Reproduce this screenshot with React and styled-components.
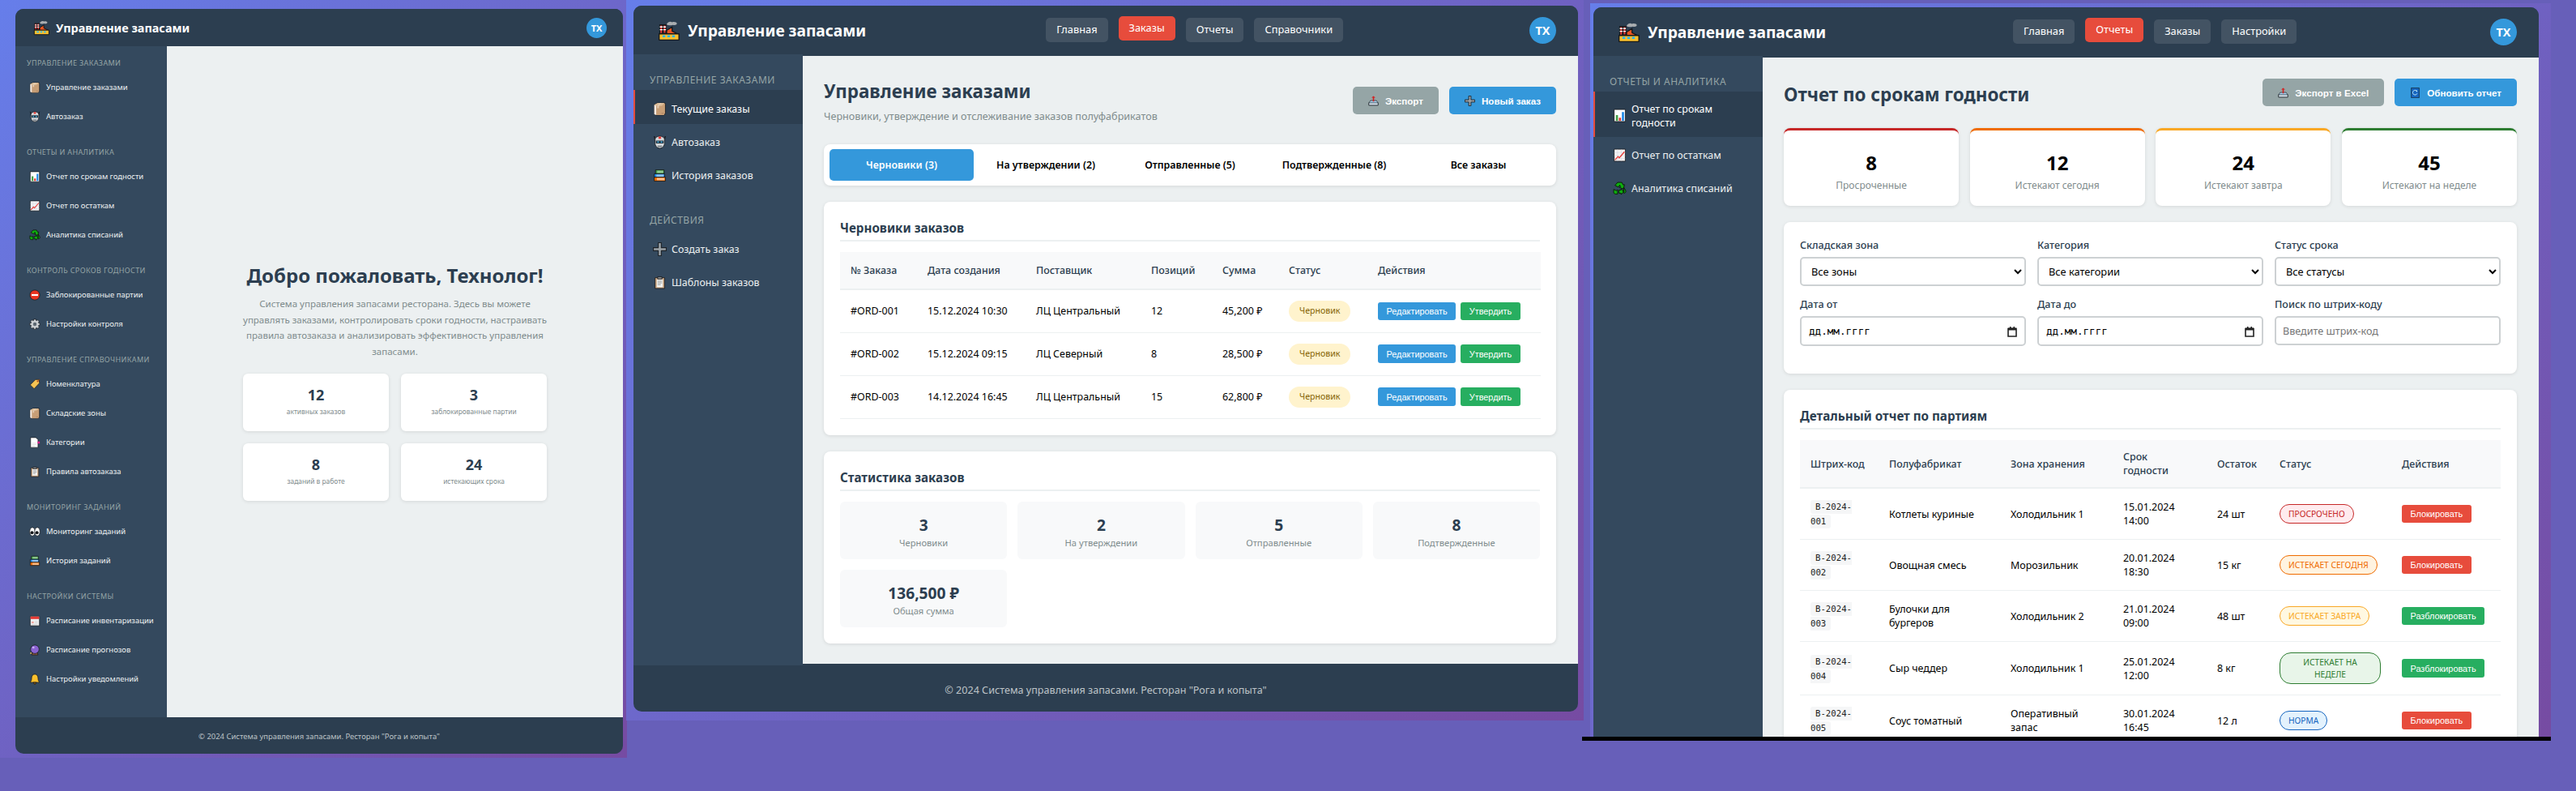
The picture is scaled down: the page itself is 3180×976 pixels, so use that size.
import React from "react";
import styled, { createGlobalStyle, css } from "styled-components";

const Global = createGlobalStyle`
  html, body { margin: 0; padding: 0; background: #675fb9; }
  * { box-sizing: border-box; }
  body { font-family: "Noto Sans", "Open Sans", sans-serif; }
`;

const Page = styled.div`
  display: flex;
  align-items: flex-start;
  width: 3180px;
  height: 976px;
  overflow: hidden;
  background: #675fb9;
`;

const Backdrop = styled.div`
  flex: none;
  width: ${(p) => p.$w}px;
  height: ${(p) => p.$h}px;
  padding: ${(p) => p.$pad};
  margin: ${(p) => p.$margin || 0};
  background: linear-gradient(135deg, #667eea 0%, #764ba2 100%);
`;

const ThirdColumn = styled.div`
  flex: none;
  margin-left: -2px;
  width: 1196px;
`;

const BlackRule = styled.div`
  height: 5px;
  background: #000;
`;

const Win = styled.div`
  display: flex;
  flex-direction: column;
  height: 100%;
  background: #2c3e50;
  border-radius: ${(p) => (p.$cut ? "10px 10px 0 0" : "10px")};
  overflow: hidden;
  color: #000;
`;

const TopBar = styled.header`
  flex: none;
  display: flex;
  align-items: center;
  justify-content: space-between;
  height: ${(p) => (p.$c ? 46 : 60)}px;
  padding: ${(p) => (p.$c ? "0 20px 0 22px" : "0 27px 0 30px")};
  background: #2c3e50;
  color: #fff;
`;

const Brand = styled.div`
  display: flex;
  align-items: center;
  gap: ${(p) => (p.$c ? 8 : 10)}px;
  font-weight: 700;
  font-size: ${(p) => (p.$c ? 14.4 : 19.2)}px;
`;

const NavRow = styled.nav`
  display: flex;
  align-items: center;
  gap: 13px;
  margin-right: 8px;
`;

const NavItem = styled.a`
  display: block;
  height: 30px;
  line-height: 29px;
  padding: 0 13px;
  font-size: 12.8px;
  color: #fff;
  border-radius: 5px;
  background: ${(p) => (p.$active ? "#e74c3c" : "#435363")};
  transform: ${(p) => (p.$active ? "translateY(-2px)" : "none")};
`;

const Avatar = styled.div`
  width: ${(p) => (p.$c ? 25 : 33)}px;
  height: ${(p) => (p.$c ? 25 : 33)}px;
  border-radius: 50%;
  background: #3498db;
  color: #fff;
  font-weight: 700;
  font-size: ${(p) => (p.$c ? 11 : 14.4)}px;
  display: flex;
  align-items: center;
  justify-content: center;
`;

const Body = styled.div`
  flex: 1;
  min-height: 0;
  display: flex;
`;

const Side = styled.aside`
  flex: none;
  width: ${(p) => (p.$c ? 187 : 209)}px;
  padding-top: ${(p) => (p.$c ? 14 : 22.5)}px;
  background: #34495e;
`;

const SideGroup = styled.div`
  margin-bottom: ${(p) => (p.$c ? 19 : 27.5)}px;
`;

const SideTitle = styled.h3`
  margin: 0 0 ${(p) => (p.$c ? 5 : 5.5)}px;
  padding-left: ${(p) => (p.$c ? 14 : 20)}px;
  font-weight: 400;
  font-size: ${(p) => (p.$c ? 9 : 12)}px;
  line-height: ${(p) => (p.$c ? 14 : 17)}px;
  letter-spacing: ${(p) => (p.$c ? 0.38 : 0.5)}px;
  text-transform: uppercase;
  white-space: nowrap;
  color: #95a5a6;
`;

const SideItem = styled.a`
  display: flex;
  align-items: center;
  gap: ${(p) => (p.$c ? 7 : 6)}px;
  color: #ecf0f1;
  font-size: ${(p) => (p.$c ? 9.45 : 12.4)}px;
  line-height: ${(p) => (p.$c ? 14 : 17)}px;
  white-space: ${(p) => (p.$c ? "nowrap" : "normal")};
  padding: ${(p) => (p.$c ? "11px 10px 11px 17px" : "13.5px 30px 10.5px 22px")};
  border-left: ${(p) => (p.$c ? "0" : `2px solid ${p.$active ? "#e74c3c" : "transparent"}`)};
  ${(p) =>
    p.$active &&
    css`
      background: #2c3e50;
      color: #fff;
      margin-top: -1px;
      padding-top: ${p.$two ? 12.5 : 14.5}px;
      padding-bottom: ${p.$two ? 9.5 : 10.5}px;
    `}
`;

const Main = styled.main`
  flex: 1;
  min-width: 0;
  margin: ${(p) => p.$margin || 0};
  padding: ${(p) => p.$pad || "26px 27px 26px 26px"};
  background: #ecf0f1;
  overflow: hidden;
`;

const Foot = styled.footer`
  flex: none;
  height: ${(p) => (p.$c ? 45 : 57)}px;
  display: flex;
  align-items: center;
  justify-content: center;
  padding-top: ${(p) => (p.$c ? 2 : 3)}px;
  color: #bdc3c7;
  font-size: ${(p) => (p.$c ? 9.45 : 12.6)}px;
`;

/* welcome */
const Welcome = styled.div`
  display: flex;
  flex-direction: column;
  align-items: center;
  text-align: center;
  padding-top: 266px;
`;

const WelcomeTitle = styled.h2`
  margin: 0;
  color: #2c3e50;
  font-size: 24px;
  font-weight: 700;
  line-height: 34px;
`;

const WelcomeText = styled.p`
  margin: 8px 0 0;
  width: 376px;
  color: #7f8c8d;
  font-size: 11.5px;
  line-height: 19.5px;
`;

const WelcomeGrid = styled.div`
  display: grid;
  grid-template-columns: 180px 180px;
  gap: 15px;
  margin-top: 18px;
`;

const WelcomeCard = styled.div`
  height: 71px;
  padding-top: 13px;
  background: #fff;
  border-radius: 6px;
  box-shadow: 0 1px 4px rgba(0, 0, 0, 0.1);
`;

const WelcomeNum = styled.div`
  color: #2c3e50;
  font-size: 18px;
  font-weight: 700;
  line-height: 27px;
`;

const WelcomeLabel = styled.div`
  color: #7f8c8d;
  font-size: 8.4px;
  line-height: 13px;
`;

/* page head */
const Head = styled.div`
  display: flex;
  justify-content: space-between;
  align-items: ${(p) => (p.$top ? "flex-start" : "center")};
  height: ${(p) => (p.$top ? 36 : 58)}px;
  margin-bottom: 25px;
`;

const H1 = styled.h1`
  margin: 0 0 4px;
  color: #2c3e50;
  font-size: 22.4px;
  font-weight: 700;
  line-height: ${(p) => (p.$tall ? 40 : 36)}px;
`;

const Sub = styled.p`
  margin: 0;
  color: #7f8c8d;
  font-size: 12.6px;
  line-height: 18px;
`;

const HeadActions = styled.div`
  display: flex;
  gap: 13px;
`;

const Btn = styled.button`
  display: flex;
  align-items: center;
  gap: 8px;
  height: 34px;
  padding: 0 19px;
  border: 0;
  border-radius: 5px;
  background: ${(p) => p.$bg};
  color: #fff;
  font: 700 11.6px "Liberation Sans", Arial, sans-serif;
`;

const Tabs = styled.div`
  display: flex;
  height: 51px;
  padding: 6px 7px;
  margin-bottom: 20px;
  background: #fff;
  border-radius: 8px;
  box-shadow: 0 1px 4px rgba(0, 0, 0, 0.1);
`;

const Tab = styled.div`
  flex: 1;
  display: flex;
  align-items: center;
  justify-content: center;
  border-radius: 5px;
  font-size: 12.4px;
  font-weight: 600;
  background: ${(p) => (p.$active ? "#3498db" : "transparent")};
  color: ${(p) => (p.$active ? "#fff" : "#000")};
`;

const Card = styled.section`
  padding: 20px;
  margin-bottom: 20px;
  background: #fff;
  border-radius: 8px;
  box-shadow: 0 1px 4px rgba(0, 0, 0, 0.1);
`;

const CardTitle = styled.h3`
  margin: 0 0 13px;
  padding-bottom: 3px;
  border-bottom: 2px solid #ecf0f1;
  color: #2c3e50;
  font-size: 15.2px;
  font-weight: 700;
  line-height: 24px;
`;

const Table = styled.table`
  width: 100%;
  table-layout: fixed;
  border-collapse: collapse;
  font-size: 12.45px;
  line-height: 17px;
`;

const Th = styled.th`
  width: ${(p) => p.$w}px;
  padding: ${(p) => (p.$tight ? "12px 13px" : "14px 13px")};
  text-align: left;
  font-weight: 500;
  color: #2c3e50;
  background: #f8f9fa;
  border-bottom: 2px solid #ecf0f1;
`;

const Td = styled.td`
  height: ${(p) => (p.$h ? `${p.$h}px` : "auto")};
  padding: ${(p) => (p.$h ? "0 13px" : "13px")};
  border-bottom: 1.5px solid #ecf0f1;
  color: #000;
`;

const DraftBadge = styled.span`
  display: inline-block;
  padding: 5.5px 13px;
  border-radius: 14px;
  background: #fff3cd;
  color: #856404;
  font-size: 10.6px;
  line-height: 15px;
`;

const SmallBtn = styled.button`
  height: 22.5px;
  padding: 0 10.5px;
  margin-right: 6px;
  border: 0;
  border-radius: 3px;
  background: ${(p) => p.$bg};
  color: #fff;
  font: 400 10.9px "Liberation Sans", Arial, sans-serif;
  vertical-align: middle;
`;

const Tiles = styled.div`
  display: grid;
  grid-template-columns: repeat(4, 1fr);
  gap: 13px;
`;

const Tile = styled.div`
  height: 71px;
  padding-top: 15px;
  text-align: center;
  background: #f8f9fa;
  border-radius: 6px;
`;

const TileNum = styled.div`
  color: #2c3e50;
  font-size: 19.2px;
  font-weight: 700;
  line-height: 27px;
`;

const TileLabel = styled.div`
  color: #7f8c8d;
  font-size: 11.2px;
  line-height: 17px;
`;

/* report */
const KpiRow = styled.div`
  display: grid;
  grid-template-columns: repeat(4, 1fr);
  gap: 13.5px;
  margin-bottom: 20px;
`;

const Kpi = styled.div`
  height: 96px;
  padding-top: 25px;
  text-align: center;
  background: #fff;
  border-top: 3px solid ${(p) => p.$color};
  border-radius: 8px;
  box-shadow: 0 1px 4px rgba(0, 0, 0, 0.1);
`;

const KpiNum = styled.div`
  font-size: 24px;
  font-weight: 700;
  line-height: 30px;
  color: #000;
`;

const KpiLabel = styled.div`
  margin-top: 4px;
  color: #7f8c8d;
  font-size: 12px;
  line-height: 18px;
`;

const FilterGrid = styled.div`
  display: grid;
  grid-template-columns: repeat(3, 1fr);
  column-gap: 14px;
`;

const Field = styled.div`
  margin-bottom: 14px;
`;

const FieldLabel = styled.label`
  display: block;
  margin-bottom: 5px;
  color: #2c3e50;
  font-size: 12.6px;
  font-weight: 500;
  line-height: 18px;
`;

const control = css`
  width: 100%;
  height: 36px;
  border: 2px solid #cdd1d3;
  border-radius: 5px;
  background: #fff;
  color: #000;
  font-family: "Noto Sans", sans-serif;
  font-size: 12.8px;
`;

const Select = styled.select`
  ${control}
  padding: 0 8px;
`;

const TextInput = styled.input`
  ${control}
  padding: 0 8px;
  font-size: 12.6px;
  &::placeholder { color: #757575; }
`;

const DateBox = styled.div`
  ${control}
  display: flex;
  align-items: center;
  justify-content: space-between;
  height: 37px;
  padding: 0 8px 0 9px;
  font: 12.6px "DejaVu Sans Mono", monospace;
`;

const Code = styled.code`
  padding: 2px 6px;
  background: #f5f6f7;
  border-radius: 3px;
  font: 400 10.7px/17px "DejaVu Sans Mono", monospace;
  color: #222;
`;

const StatusPill = styled.span`
  display: inline-block;
  padding: 3.5px 10px;
  border: 1.5px solid ${(p) => p.$c};
  border-radius: 14px;
  background: ${(p) => p.$bg};
  color: ${(p) => p.$c};
  font-size: 10.2px;
  line-height: 15px;
  text-align: center;
  text-transform: uppercase;
`;

const Outline = { stroke: "#15181c", strokeWidth: 1.6, strokeLinejoin: "round" };

const Glyph = ({ name }) => {
  switch (name) {
    case "factory":
      return (
        <>
          <path d="M13 7c1-3 5-5 8-3 3-1 7 0 7 2s-3 3-6 2c-3 1-7 1-9-1z" fill="#a9adb0" />
          <path d="M3 21V8h4v13zM8 21V8h4v13z" fill="#e53935" {...Outline} />
          <path d="M3 11h4M3 15h4M8 11h4M8 15h4" stroke="#fff" strokeWidth="1.6" />
          <path d="M2 21l11-1 0-4 8-5 0 6 10 5z" fill="#e8551f" {...Outline} />
          <path d="M2 30v-9h29v9z" fill="#fbc02d" {...Outline} />
          <path d="M7 23h4v3H7zM14 23h4v3h-4zM21 23h4v3h-4z" fill="#29b6f6" />
        </>
      );
    case "box":
      return (
        <>
          <path d="M3 6l8-4h17l1 3v21l-3 4H7l-4-2z" fill="#caa27a" {...Outline} />
          <path d="M3 6l8-4h16l-7 7H8z" fill="#dcbd98" />
          <path d="M3 6l5 3v21l-5-2z" fill="#f4ebe4" />
          <path d="M8 9h18v21H8z" fill="#c79e76" />
          <path d="M16 2l-6 7v5h4V9l6-7z" fill="#e3cbb0" />
          <path d="M20 26h5" stroke="#a5795a" strokeWidth="1.4" />
        </>
      );
    case "robot":
      return (
        <>
          <path d="M3 2l4 6-2 5zM29 2l-4 6 2 5z" fill="#3c4750" {...Outline} />
          <path d="M5 10c0-5 5-8 11-8s11 3 11 8v8c0 6-4 12-11 12S5 24 5 18z" fill="#d3d7da" {...Outline} />
          <path d="M13 3h6v5h-6z" fill="#e53935" />
          <path d="M7 12h18v7H7z" fill="#20303c" />
          <path d="M10 14h4v3h-4zM18 14h4v3h-4z" fill="#4fc3f7" />
          <path d="M11 24h10v3H11z" fill="#6c757d" />
        </>
      );
    case "books":
      return (
        <>
          <path d="M6 3h20v9H6z" fill="#43a047" {...Outline} />
          <path d="M10 6h14M10 9h14" stroke="#e8f5e9" strokeWidth="1.3" />
          <path d="M3 12h24v8H3z" fill="#1e88e5" {...Outline} />
          <path d="M8 15h17M8 17.5h17" stroke="#fff" strokeWidth="1.3" />
          <path d="M3 20h26v9H3z" fill="#ef6c00" {...Outline} />
          <path d="M9 23h18M9 26h18" stroke="#fff" strokeWidth="1.5" />
        </>
      );
    case "bars":
      return (
        <>
          <path d="M3 2h26v28H3z" fill="#fff" {...Outline} />
          <path d="M7 15h5v13H7z" fill="#43a047" />
          <path d="M14 21h5v7h-5z" fill="#e53935" />
          <path d="M21 8h5v20h-5z" fill="#1e88e5" />
        </>
      );
    case "trend":
      return (
        <>
          <path d="M3 2h26v28H3z" fill="#f4f4f4" {...Outline} />
          <path d="M3 10h26M3 17h26M3 24h26M11 2v28M20 2v28" stroke="#ccd" strokeWidth=".8" />
          <path d="M5 27l7-8 3 3 12-14" fill="none" stroke="#e53935" strokeWidth="2.4" />
        </>
      );
    case "recycle":
      return (
        <path d="M11 2h10l3 6 3-1-2 10-10-3 3-2-2-4-3 5-8-4zM2 18l6 3 3-2 0 10H7c-4 0-6-3-5-6zM14 20h5v-3l8 6-8 7v-3h-5zM25 13l5 8c1 3-1 6-4 6l-3-5 3-1z" fill="#0fae0f" stroke="#0c1a0c" strokeWidth="1.8" strokeLinejoin="round" />
      );
    case "noentry":
      return (
        <>
          <circle cx="16" cy="16" r="14" fill="#e8321f" {...Outline} />
          <path d="M7 13.5h18v5H7z" fill="#fff" />
        </>
      );
    case "gear":
      return (
        <>
          <path d="M13 2h6l1 4 4-2 4 4-2 4 4 1v6l-4 1 2 4-4 4-4-2-1 4h-6l-1-4-4 2-4-4 2-4-4-1v-6l4-1-2-4 4-4 4 2z" fill="#c9cdd0" {...Outline} />
          <circle cx="16" cy="16" r="5" fill="#5b6670" />
        </>
      );
    case "tag":
      return (
        <>
          <path d="M18 3h10l1 10-15 16L3 18z" fill="#f6c453" {...Outline} />
          <circle cx="24" cy="8" r="2.4" fill="#b4451f" />
          <path d="M25 7l4-5" stroke="#b4451f" strokeWidth="1.6" />
        </>
      );
    case "cardindex":
      return (
        <>
          <path d="M4 2h15l6 6v22H4z" fill="#fff" {...Outline} />
          <path d="M8 18h12M8 22h12M8 26h8" stroke="#c9c9c9" strokeWidth="1.2" />
          <path d="M24 13h6v6h-6z" fill="#e91e8c" />
        </>
      );
    case "clipboard":
      return (
        <>
          <path d="M5 5h22v25H5z" fill="#c9a684" {...Outline} />
          <path d="M9 9h14v18H9z" fill="#f3f3f0" />
          <path d="M11 3h10v5H11z" fill="#8a8f94" {...Outline} />
          <path d="M11 13h10M11 17h10M11 21h7" stroke="#7e8489" strokeWidth="1.6" />
        </>
      );
    case "eyes":
      return (
        <>
          <ellipse cx="9" cy="16" rx="7.5" ry="12" fill="#fff" {...Outline} />
          <ellipse cx="23" cy="16" rx="7.5" ry="12" fill="#fff" {...Outline} />
          <circle cx="8" cy="19" r="4.6" fill="#15181c" />
          <circle cx="22" cy="19" r="4.6" fill="#15181c" />
        </>
      );
    case "calendar":
      return (
        <>
          <path d="M3 3h26v27H3z" fill="#eee" {...Outline} />
          <path d="M4 4h24v7H4z" fill="#e53935" />
          <path d="M7 18h6v5H7z" fill="#f0a8a0" />
          <path d="M16 18h8M16 22h8M7 26h17" stroke="#c9c9c9" strokeWidth="1.2" />
        </>
      );
    case "ball":
      return (
        <>
          <path d="M9 23h14l2 7H7z" fill="#8d5a3c" {...Outline} />
          <circle cx="16" cy="14" r="12" fill="#8a63d2" {...Outline} />
          <circle cx="12" cy="9" r="3" fill="#c8b4f0" />
          <circle cx="5" cy="25" r="2" fill="#f6c453" />
        </>
      );
    case "bell":
      return (
        <>
          <path d="M16 2c6 0 9 5 9 11 0 6 2 9 4 12H3c2-3 4-6 4-12C7 7 10 2 16 2z" fill="#fbc02d" {...Outline} />
          <path d="M12 25h8l-2 5h-4z" fill="#8a5d10" {...Outline} />
        </>
      );
    case "plus":
      return <path d="M12.5 1h7v11.5H31v7H19.5V31h-7V19.5H1v-7h11.5z" fill="#9aa1a6" stroke="#1c2228" strokeWidth="2.2" strokeLinejoin="round" />;
    case "outbox":
      return (
        <>
          <path d="M2 22l5-7h18l5 7v7H2z" fill="#a8d0ee" {...Outline} />
          <path d="M2 22h28v7H2z" fill="#dceaf5" {...Outline} />
          <path d="M14 18V6h-4l6-5 6 5h-4v12z" fill="#d32020" />
        </>
      );
    case "refresh":
      return (
        <>
          <path d="M4 1h24v30H4z" fill="#1565c0" {...Outline} />
          <path d="M21 11a7 7 0 1 0 1 7" fill="none" stroke="#dff" strokeWidth="2" />
          <path d="M18 8l5 2-3 4z" fill="#dff" />
        </>
      );
    default:
      return null;
  }
};

const IconSvg = styled.svg`
  flex: none;
  width: ${(p) => p.$s}px;
  height: ${(p) => p.$s}px;
  display: block;
`;

const Icon = ({ name, size }) => (
  <IconSvg $s={size} viewBox="0 0 32 32" aria-hidden="true">
    <Glyph name={name} />
  </IconSvg>
);

const CalendarIcon = () => (
  <IconSvg $s={14} viewBox="0 0 14 14" aria-hidden="true">
    <path d="M2 3.5h10v9.5H2z" fill="none" stroke="#222" strokeWidth="1.6" />
    <path d="M2 2.5h10v3H2zM4 1h1.5v2H4zM8.5 1H10v2H8.5z" fill="#222" />
  </IconSvg>
);

const leftNav = [
  ["Управление заказами", [["box", "Управление заказами"], ["robot", "Автозаказ"]]],
  ["Отчеты и аналитика", [["bars", "Отчет по срокам годности"], ["trend", "Отчет по остаткам"], ["recycle", "Аналитика списаний"]]],
  ["Контроль сроков годности", [["noentry", "Заблокированные партии"], ["gear", "Настройки контроля"]]],
  ["Управление справочниками", [["tag", "Номенклатура"], ["box", "Складские зоны"], ["cardindex", "Категории"], ["clipboard", "Правила автозаказа"]]],
  ["Мониторинг заданий", [["eyes", "Мониторинг заданий"], ["books", "История заданий"]]],
  ["Настройки системы", [["calendar", "Расписание инвентаризации"], ["ball", "Расписание прогнозов"], ["bell", "Настройки уведомлений"]]],
];

const midNav = [
  ["Управление заказами", [["box", "Текущие заказы", true], ["robot", "Автозаказ"], ["books", "История заказов"]]],
  ["Действия", [["plus", "Создать заказ"], ["clipboard", "Шаблоны заказов"]]],
];

const rightNav = [
  ["Отчеты и аналитика", [["bars", "Отчет по срокам годности", true, true], ["trend", "Отчет по остаткам"], ["recycle", "Аналитика списаний"]]],
];

const Sidebar = ({ groups, compact }) => (
  <Side $c={compact}>
    {groups.map(([title, items]) => (
      <SideGroup key={title} $c={compact}>
        <SideTitle $c={compact}>{title}</SideTitle>
        {items.map(([icon, label, active, two]) => (
          <SideItem key={label} $c={compact} $active={active} $two={two}>
            <Icon name={icon} size={compact ? 14 : 17} />
            <span>{label}</span>
          </SideItem>
        ))}
      </SideGroup>
    ))}
  </Side>
);

const Header = ({ compact, nav, active }) => (
  <TopBar $c={compact}>
    <Brand $c={compact}>
      <Icon name="factory" size={compact ? 20 : 27} />
      Управление запасами
    </Brand>
    {nav && (
      <NavRow>
        {nav.map((n) => (
          <NavItem key={n} $active={n === active}>{n}</NavItem>
        ))}
      </NavRow>
    )}
    <Avatar $c={compact}>ТХ</Avatar>
  </TopBar>
);

const copyright = '© 2024 Система управления запасами. Ресторан "Рога и копыта"';

const HomeWindow = () => (
  <Win>
    <Header compact />
    <Body>
      <Sidebar groups={leftNav} compact />
      <Main $pad="0">
        <Welcome>
          <WelcomeTitle>Добро пожаловать, Технолог!</WelcomeTitle>
          <WelcomeText>
            Система управления запасами ресторана. Здесь вы можете управлять заказами, контролировать сроки годности, настраивать правила автозаказа и анализировать эффективность управления запасами.
          </WelcomeText>
          <WelcomeGrid>
            {[["12", "активных заказов"], ["3", "заблокированные партии"], ["8", "заданий в работе"], ["24", "истекающих срока"]].map(([n, l]) => (
              <WelcomeCard key={l}>
                <WelcomeNum>{n}</WelcomeNum>
                <WelcomeLabel>{l}</WelcomeLabel>
              </WelcomeCard>
            ))}
          </WelcomeGrid>
        </Welcome>
      </Main>
    </Body>
    <Foot $c>{copyright}</Foot>
  </Win>
);

const drafts = [
  ["#ORD-001", "15.12.2024 10:30", "ЛЦ Центральный", "12", "45,200 ₽"],
  ["#ORD-002", "15.12.2024 09:15", "ЛЦ Северный", "8", "28,500 ₽"],
  ["#ORD-003", "14.12.2024 16:45", "ЛЦ Центральный", "15", "62,800 ₽"],
];

const OrdersWindow = () => (
  <Win>
    <Header nav={["Главная", "Заказы", "Отчеты", "Справочники"]} active="Заказы" />
    <Body>
      <Sidebar groups={midNav} />
      <Main $margin="2px 0">
        <Head>
          <div>
            <H1>Управление заказами</H1>
            <Sub>Черновики, утверждение и отслеживание заказов полуфабрикатов</Sub>
          </div>
          <HeadActions>
            <Btn $bg="#95a5a6"><Icon name="outbox" size={13} />Экспорт</Btn>
            <Btn $bg="#3498db"><Icon name="plus" size={13} />Новый заказ</Btn>
          </HeadActions>
        </Head>
        <Tabs>
          <Tab $active>Черновики (3)</Tab>
          <Tab>На утверждении (2)</Tab>
          <Tab>Отправленные (5)</Tab>
          <Tab>Подтвержденные (8)</Tab>
          <Tab>Все заказы</Tab>
        </Tabs>
        <Card>
          <CardTitle>Черновики заказов</CardTitle>
          <Table>
            <thead>
              <tr>
                <Th $w={95}>№ Заказа</Th>
                <Th $w={134}>Дата создания</Th>
                <Th $w={142}>Поставщик</Th>
                <Th $w={88}>Позиций</Th>
                <Th $w={82}>Сумма</Th>
                <Th $w={110}>Статус</Th>
                <Th $w={214}>Действия</Th>
              </tr>
            </thead>
            <tbody>
              {drafts.map((r) => (
                <tr key={r[0]}>
                  {r.map((c) => (
                    <Td key={c} $h={53}>{c}</Td>
                  ))}
                  <Td $h={53}><DraftBadge>Черновик</DraftBadge></Td>
                  <Td $h={53}>
                    <SmallBtn $bg="#3498db">Редактировать</SmallBtn>
                    <SmallBtn $bg="#27ae60">Утвердить</SmallBtn>
                  </Td>
                </tr>
              ))}
            </tbody>
          </Table>
        </Card>
        <Card>
          <CardTitle>Статистика заказов</CardTitle>
          <Tiles>
            {[["3", "Черновики"], ["2", "На утверждении"], ["5", "Отправленные"], ["8", "Подтвержденные"], ["136,500 ₽", "Общая сумма"]].map(([n, l]) => (
              <Tile key={l}>
                <TileNum>{n}</TileNum>
                <TileLabel>{l}</TileLabel>
              </Tile>
            ))}
          </Tiles>
        </Card>
      </Main>
    </Body>
    <Foot>{copyright}</Foot>
  </Win>
);

const pills = {
  over: ["Просрочено", "#c62828", "#ffebee"],
  today: ["Истекает сегодня", "#ef6c00", "#fff3e0"],
  tomorrow: ["Истекает завтра", "#f9a825", "#fff8e1"],
  week: ["Истекает на неделе", "#2e7d32", "#e8f5e9"],
  ok: ["Норма", "#1565c0", "#e3f2fd"],
};

const batches = [
  ["B-2024-001", "Котлеты куриные", "Холодильник 1", "15.01.2024 14:00", "24 шт", "over", false],
  ["B-2024-002", "Овощная смесь", "Морозильник", "20.01.2024 18:30", "15 кг", "today", false],
  ["B-2024-003", "Булочки для бургеров", "Холодильник 2", "21.01.2024 09:00", "48 шт", "tomorrow", true],
  ["B-2024-004", "Сыр чеддер", "Холодильник 1", "25.01.2024 12:00", "8 кг", "week", true],
  ["B-2024-005", "Соус томатный", "Оперативный запас", "30.01.2024 16:45", "12 л", "ok", false],
];

const ReportWindow = () => (
  <Win $cut>
    <Header nav={["Главная", "Отчеты", "Заказы", "Настройки"]} active="Отчеты" />
    <Body>
      <Sidebar groups={rightNav} />
      <Main $margin="2px 0 0">
        <Head $top>
          <H1 $tall>Отчет по срокам годности</H1>
          <HeadActions>
            <Btn $bg="#95a5a6"><Icon name="outbox" size={13} />Экспорт в Excel</Btn>
            <Btn $bg="#3498db"><Icon name="refresh" size={13} />Обновить отчет</Btn>
          </HeadActions>
        </Head>
        <KpiRow>
          {[["8", "Просроченные", "#c62828"], ["12", "Истекают сегодня", "#ef6c00"], ["24", "Истекают завтра", "#f9a825"], ["45", "Истекают на неделе", "#2e7d32"]].map(([n, l, c]) => (
            <Kpi key={l} $color={c}>
              <KpiNum>{n}</KpiNum>
              <KpiLabel>{l}</KpiLabel>
            </Kpi>
          ))}
        </KpiRow>
        <Card>
          <FilterGrid>
            <Field>
              <FieldLabel>Складская зона</FieldLabel>
              <Select defaultValue="a"><option value="a">Все зоны</option></Select>
            </Field>
            <Field>
              <FieldLabel>Категория</FieldLabel>
              <Select defaultValue="a"><option value="a">Все категории</option></Select>
            </Field>
            <Field>
              <FieldLabel>Статус срока</FieldLabel>
              <Select defaultValue="a"><option value="a">Все статусы</option></Select>
            </Field>
            <Field>
              <FieldLabel>Дата от</FieldLabel>
              <DateBox>дд.мм.гггг<CalendarIcon /></DateBox>
            </Field>
            <Field>
              <FieldLabel>Дата до</FieldLabel>
              <DateBox>дд.мм.гггг<CalendarIcon /></DateBox>
            </Field>
            <Field>
              <FieldLabel>Поиск по штрих-коду</FieldLabel>
              <TextInput placeholder="Введите штрих-код" readOnly />
            </Field>
          </FilterGrid>
        </Card>
        <Card>
          <CardTitle>Детальный отчет по партиям</CardTitle>
          <Table>
            <thead>
              <tr>
                <Th $tight $w={97}>Штрих-код</Th>
                <Th $tight $w={150}>Полуфабрикат</Th>
                <Th $tight $w={139}>Зона хранения</Th>
                <Th $tight $w={116}>Срок<br />годности</Th>
                <Th $tight $w={77}>Остаток</Th>
                <Th $tight $w={151}>Статус</Th>
                <Th $tight $w={135}>Действия</Th>
              </tr>
            </thead>
            <tbody>
              {batches.map((b) => {
                const [text, c, bg] = pills[b[5]];
                return (
                  <tr key={b[0]}>
                    <Td><Code>{b[0]}</Code></Td>
                    <Td>{b[1]}</Td>
                    <Td>{b[2]}</Td>
                    <Td>{b[3]}</Td>
                    <Td>{b[4]}</Td>
                    <Td><StatusPill $c={c} $bg={bg}>{text}</StatusPill></Td>
                    <Td>
                      <SmallBtn $bg={b[6] ? "#27ae60" : "#e74c3c"}>{b[6] ? "Разблокировать" : "Блокировать"}</SmallBtn>
                    </Td>
                  </tr>
                );
              })}
            </tbody>
          </Table>
        </Card>
      </Main>
    </Body>
  </Win>
);

export default function App() {
  return (
    <Page>
      <Global />
      <Backdrop $w={774} $h={935} $pad="11px 5px 5px 19px">
        <HomeWindow />
      </Backdrop>
      <Backdrop $w={1182} $h={889} $margin="0 0 0 -1px" $pad="7px 7px 11px 9px">
        <OrdersWindow />
      </Backdrop>
      <ThirdColumn>
        <Backdrop $w={1186} $h={905} $margin="4px 0 0 10px" $pad="5px 15px 0 4px">
          <ReportWindow />
        </Backdrop>
        <BlackRule />
      </ThirdColumn>
    </Page>
  );
}
